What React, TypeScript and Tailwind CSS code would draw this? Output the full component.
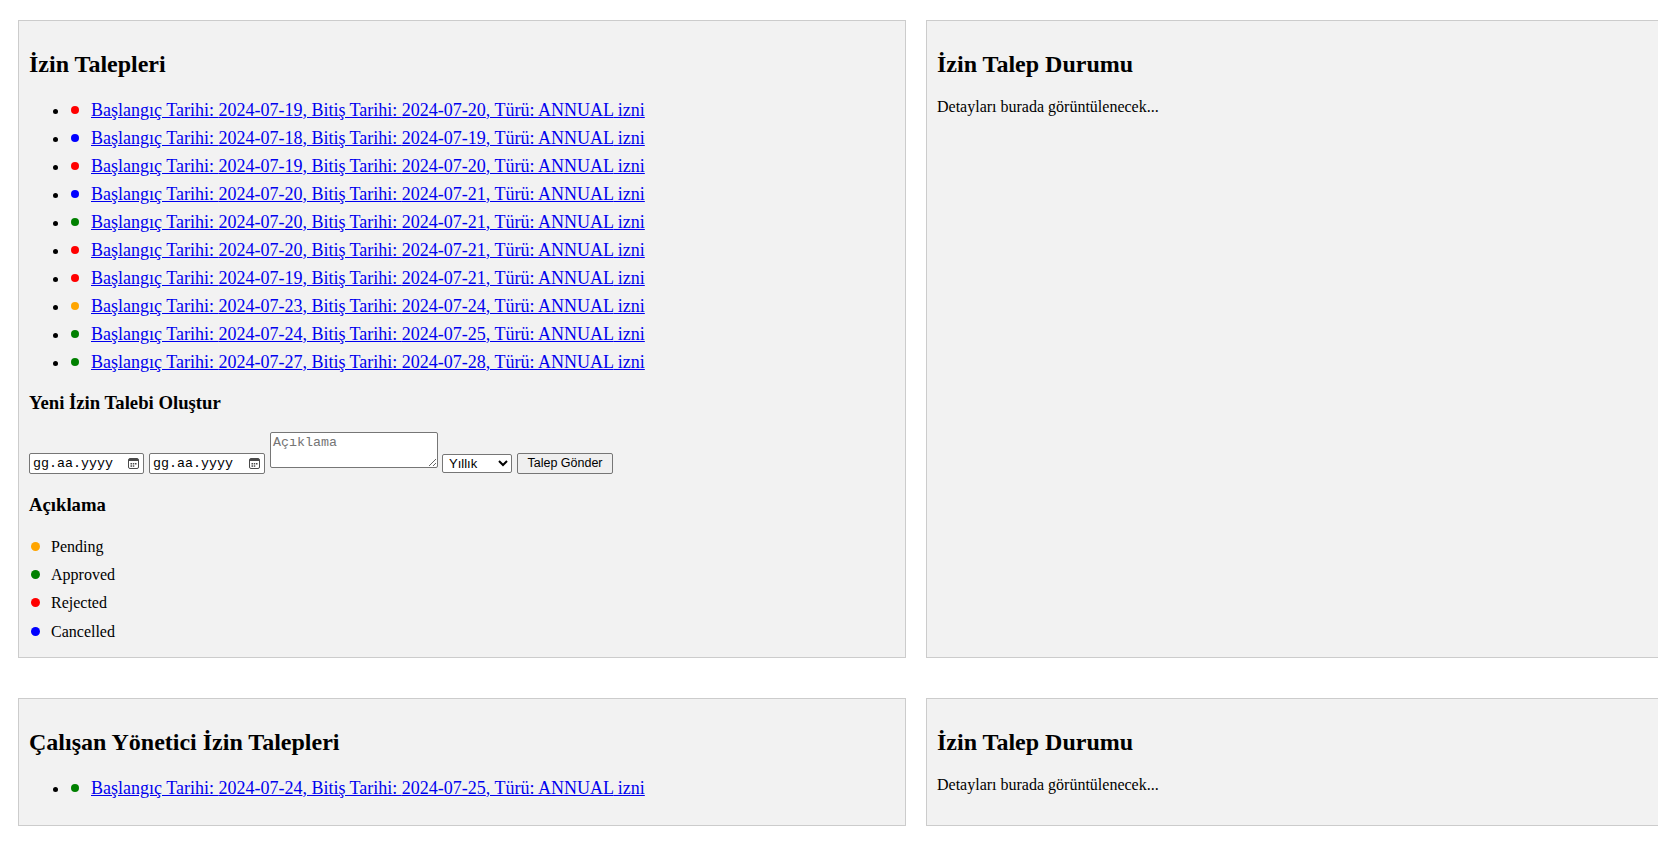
import React from 'react';

type Status = 'pending' | 'approved' | 'rejected' | 'cancelled';

interface LeaveRequest {
  start: string;
  end: string;
  type: string;
  status: Status;
}

const statusColor: Record<Status, string> = {
  pending: 'bg-[#ffa500]',
  approved: 'bg-[#008000]',
  rejected: 'bg-[#ff0000]',
  cancelled: 'bg-[#0000ff]',
};

const myRequests: LeaveRequest[] = [
  { start: '2024-07-19', end: '2024-07-20', type: 'ANNUAL', status: 'rejected' },
  { start: '2024-07-18', end: '2024-07-19', type: 'ANNUAL', status: 'cancelled' },
  { start: '2024-07-19', end: '2024-07-20', type: 'ANNUAL', status: 'rejected' },
  { start: '2024-07-20', end: '2024-07-21', type: 'ANNUAL', status: 'cancelled' },
  { start: '2024-07-20', end: '2024-07-21', type: 'ANNUAL', status: 'approved' },
  { start: '2024-07-20', end: '2024-07-21', type: 'ANNUAL', status: 'rejected' },
  { start: '2024-07-19', end: '2024-07-21', type: 'ANNUAL', status: 'rejected' },
  { start: '2024-07-23', end: '2024-07-24', type: 'ANNUAL', status: 'pending' },
  { start: '2024-07-24', end: '2024-07-25', type: 'ANNUAL', status: 'approved' },
  { start: '2024-07-27', end: '2024-07-28', type: 'ANNUAL', status: 'approved' },
];

const managerRequests: LeaveRequest[] = [
  { start: '2024-07-24', end: '2024-07-25', type: 'ANNUAL', status: 'approved' },
];

const legend: { status: Status; label: string }[] = [
  { status: 'pending', label: 'Pending' },
  { status: 'approved', label: 'Approved' },
  { status: 'rejected', label: 'Rejected' },
  { status: 'cancelled', label: 'Cancelled' },
];

const CalendarIcon = () => (
  <svg width="11" height="11" viewBox="0 0 11 11" className="shrink-0">
    <rect x="0.5" y="0.5" width="10" height="10" rx="1.5" fill="none" stroke="#4a4a4a" />
    <rect x="1" y="1" width="9" height="2" fill="#4a4a4a" />
    <rect x="2.5" y="5" width="1.5" height="1.5" fill="#4a4a4a" />
    <rect x="4.75" y="5" width="1.5" height="1.5" fill="#4a4a4a" />
    <rect x="7" y="5" width="1.5" height="1.5" fill="#4a4a4a" />
    <rect x="2.5" y="7.3" width="1.5" height="1.5" fill="#4a4a4a" />
    <rect x="4.75" y="7.3" width="1.5" height="1.5" fill="#4a4a4a" />
  </svg>
);

const DateBox = ({ width }: { width: string }) => (
  <div
    className={`${width} mt-[21px] h-[21px] flex items-center justify-between border border-[#767676] rounded-[2px] bg-white pl-[3px] pr-[4px]`}
  >
    <span className="font-['Liberation_Mono',monospace] text-[13.33px] leading-[15px] text-black">gg.aa.yyyy</span>
    <CalendarIcon />
  </div>
);

const RequestList = ({ items }: { items: LeaveRequest[] }) => (
  <ul className="list-disc pl-10 mt-[18px] marker:text-[16px]">
    {items.map((r, i) => (
      <li key={i} className="text-[18px] leading-[28px]">
        <span className={`inline-block w-[8px] h-[8px] rounded-full ml-[2px] mr-[12px] align-[2px] ${statusColor[r.status]}`} />
        <a href="#" className="text-[#0000ee] underline">
          Başlangıç Tarihi: {r.start}, Bitiş Tarihi: {r.end}, Türü: {r.type} izni
        </a>
      </li>
    ))}
  </ul>
);

const StatusPanel = ({ height }: { height: string }) => (
  <div className={`w-[888px] ${height} shrink-0 border border-[#cccccc] bg-[#f2f2f2] px-[10px] pt-[10px]`}>
    <h2 className="mt-[19px] text-[24px] leading-[28px] font-bold">İzin Talep Durumu</h2>
    <p className="mt-[20px] text-[16px] leading-[18.4px]">Detayları burada görüntülenecek...</p>
  </div>
);

export default function App() {
  return (
    <div className="w-full min-h-screen overflow-hidden bg-white text-black font-['Liberation_Serif',serif] pt-[20px] pl-[18px]">
      <div className="flex gap-[20px]">
        <div className="w-[888px] h-[638px] shrink-0 border border-[#cccccc] bg-[#f2f2f2] px-[10px] pt-[10px]">
          <h2 className="mt-[19px] text-[24px] leading-[28px] font-bold">İzin Talepleri</h2>
          <RequestList items={myRequests} />

          <h3 className="mt-[16px] text-[18.72px] leading-[22px] font-bold">Yeni İzin Talebi Oluştur</h3>
          <div className="mt-[18px] flex items-start">
            <DateBox width="w-[115px]" />
            <div className="ml-[5px]">
              <DateBox width="w-[116px]" />
            </div>
            <textarea
              placeholder="Açıklama"
              className="ml-[5px] w-[168px] h-[36px] border border-[#767676] rounded-[2px] bg-white p-[2px] font-['Liberation_Mono',monospace] text-[13.33px] leading-[15px] placeholder:text-[#757575]"
            />
            <select
              defaultValue="ANNUAL"
              className="ml-[4px] mt-[22px] w-[70px] h-[19px] border border-[#767676] rounded-[2px] bg-white pl-[2px] font-['Liberation_Sans',sans-serif] text-[13px] text-black"
            >
              <option value="ANNUAL">Yıllık</option>
              <option value="SICK">Hastalık</option>
              <option value="UNPAID">Ücretsiz</option>
            </select>
            <button className="ml-[5px] mt-[21px] w-[96px] h-[21px] border border-[#767676] rounded-[2px] bg-[#efefef] font-['Liberation_Sans',sans-serif] text-[12.5px] text-black">
              Talep Gönder
            </button>
          </div>

          <h3 className="mt-[20px] text-[18.72px] leading-[22px] font-bold">Açıklama</h3>
          <div className="mt-[17px]">
            {legend.map((l) => (
              <div key={l.status} className="text-[16px] leading-[28.2px]">
                <span className={`inline-block w-[9px] h-[9px] rounded-full ml-[2px] mr-[11px] align-[1px] ${statusColor[l.status]}`} />
                {l.label}
              </div>
            ))}
          </div>
        </div>
        <StatusPanel height="h-[638px]" />
      </div>

      <div className="mt-[40px] flex gap-[20px]">
        <div className="w-[888px] h-[128px] shrink-0 border border-[#cccccc] bg-[#f2f2f2] px-[10px] pt-[10px]">
          <h2 className="mt-[19px] text-[24px] leading-[28px] font-bold">Çalışan Yönetici İzin Talepleri</h2>
          <RequestList items={managerRequests} />
        </div>
        <StatusPanel height="h-[128px]" />
      </div>
    </div>
  );
}
